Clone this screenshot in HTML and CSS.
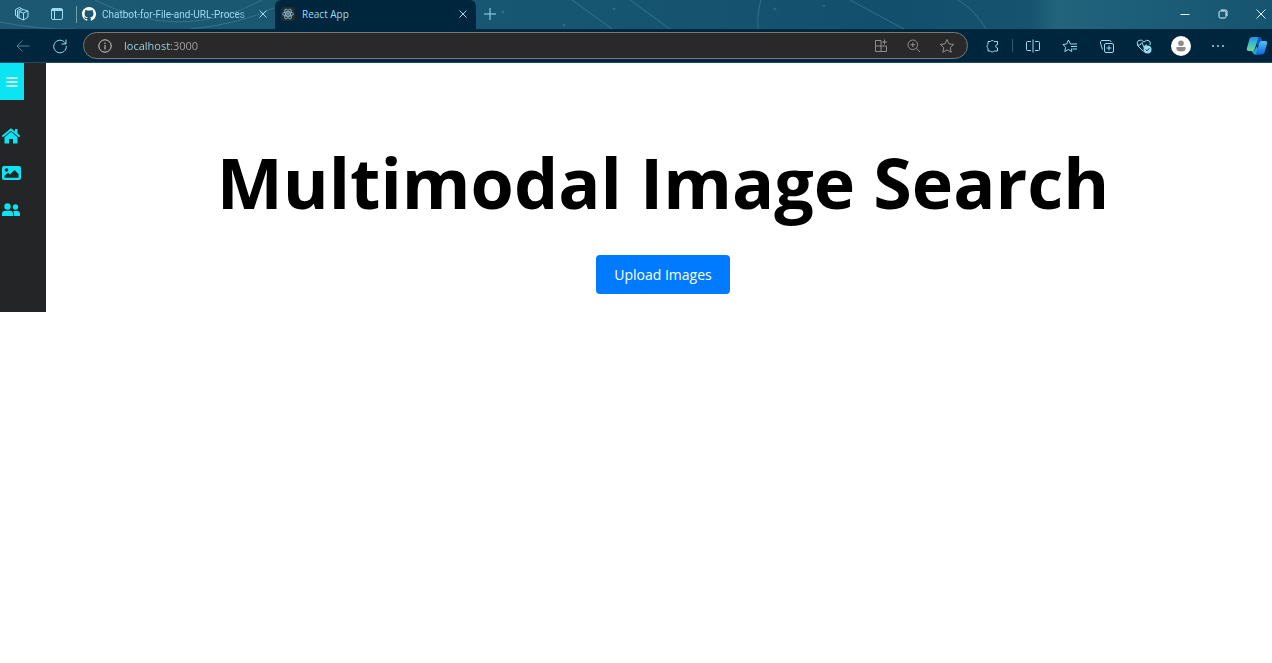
FILE: index.html
```html
<!DOCTYPE html>
<html lang="en">
<head>
    <meta charset="UTF-8">
    <meta name="viewport" content="width=device-width, initial-scale=1.0">
    <title>React App</title>
    <link rel="stylesheet" href="styles.css">
</head>
<body>

    <!-- Browser window -->
    <header class="browser">
        <div class="tab-strip">
            <svg class="strip-art" viewBox="0 0 1272 29" preserveAspectRatio="none" aria-hidden="true">
                <path d="M0 22 Q40 30 75 29 M95 0 Q180 44 262 0 M190 29 Q240 24 274 8 M572 0 L612 29 M630 0 L670 29 M761 0 Q757 12 758 29 M850 0 L904 29 M958 0 Q975 10 986 29"/>
                <circle cx="503" cy="12" r="1"/>
                <circle cx="614" cy="9" r="1"/>
                <circle cx="564" cy="25" r="1"/>
                <circle cx="824" cy="6" r="1"/>
                <circle cx="775" cy="9" r="1"/>
            </svg>
            <button class="icon-btn" aria-label="Workspaces">
                <svg width="16" height="16" viewBox="0 0 16 16"><path d="M5 5.500 L9 3.500 L14 5 V11 L9.500 14 L5 12 Z M5 5.500 L9.500 7 L14 5 M9.500 7 V14 M5 12 L3.500 11.500 V4.500 L7.500 2.500 L9 3.500 M3.500 10.500 L1.500 9.500 V3.500 L5.500 1.500 L7.500 2.500"/></svg>
            </button>
            <button class="icon-btn tab-menu" aria-label="Tab actions">
                <svg width="14" height="14" viewBox="0 0 14 14"><rect x="1.500" y="1.500" width="11" height="11" rx="1.500"/><path d="M1.500 3 H12.500" stroke-width="2"/><path d="M4.500 4 V12"/></svg>
            </button>
            <div class="tab tab-github">
                <svg class="tab-icon" viewBox="0 0 16 16" aria-hidden="true"><path class="solid" d="M8 0C3.580 0 0 3.580 0 8c0 3.540 2.290 6.530 5.470 7.590.4.070.55-.17.55-.38 0-.19-.01-.82-.01-1.490-2.010.37-2.530-.49-2.690-.94-.09-.23-.48-.94-.82-1.130-.28-.15-.68-.52-.01-.53.63-.01 1.080.58 1.230.82.72 1.210 1.870.87 2.330.66.07-.52.28-.87.51-1.070-1.780-.2-3.640-.89-3.640-3.950 0-.87.31-1.590.82-2.150-.08-.2-.36-1.020.08-2.120 0 0 .67-.21 2.200.82a7.600 7.600 0 0 1 4 0c1.530-1.040 2.200-.82 2.200-.82.44 1.100.16 1.920.08 2.120.51.56.82 1.270.82 2.150 0 3.070-1.870 3.750-3.650 3.950.29.25.54.73.54 1.480 0 1.070-.01 1.930-.01 2.200 0 .21.15.46.55.38A8 8 0 0 0 16 8c0-4.420-3.580-8-8-8z"/></svg>
                <span class="tab-title">Chatbot-for-File-and-URL-Proces</span>
                <button class="tab-close" aria-label="Close tab"><svg width="8" height="8" viewBox="0 0 8 8"><path d="M0.500 0.500 L7.500 7.500 M7.500 0.500 L0.500 7.500"/></svg></button>
            </div>
            <div class="tab tab-active">
                <svg class="tab-icon react" viewBox="0 0 14 14" aria-hidden="true"><rect width="14" height="14" rx="2"/><ellipse cx="7" cy="7" rx="5.500" ry="2.200"/><ellipse cx="7" cy="7" rx="5.500" ry="2.200" transform="rotate(60 7 7)"/><ellipse cx="7" cy="7" rx="5.500" ry="2.200" transform="rotate(120 7 7)"/><circle cx="7" cy="7" r="1"/></svg>
                <span class="tab-title">React App</span>
                <button class="tab-close" aria-label="Close tab"><svg width="8" height="8" viewBox="0 0 8 8"><path d="M0.500 0.500 L7.500 7.500 M7.500 0.500 L0.500 7.500"/></svg></button>
            </div>
            <button class="new-tab" aria-label="New tab"><svg width="12" height="12" viewBox="0 0 12 12"><path d="M6 0 V12 M0 6 H12"/></svg></button>
            <div class="window-controls">
                <button aria-label="Minimize"><svg width="10" height="10" viewBox="0 0 10 10"><path d="M0.500 5.500 H9.500"/></svg></button>
                <button aria-label="Restore"><svg width="10" height="10" viewBox="0 0 10 10"><rect x="1" y="2" width="7" height="7" rx="1.500"/><path d="M3 1 H7.500 Q9 1 9 2.500 V7"/></svg></button>
                <button aria-label="Close"><svg width="10" height="10" viewBox="0 0 10 10"><path d="M0.500 0.500 L9.500 9.500 M9.500 0.500 L0.500 9.500"/></svg></button>
            </div>
        </div>

        <div class="toolbar">
            <button class="icon-btn back" aria-label="Back"><svg width="14" height="14" viewBox="0 0 14 14"><path d="M13.500 7 H1 M6.500 1.500 L1 7 L6.500 12.500"/></svg></button>
            <button class="icon-btn" aria-label="Refresh"><svg width="16" height="16" viewBox="0 0 16 16"><path d="M13.800 6 A6.300 6.300 0 1 0 14.300 8 M14 1.500 V6 H9.500"/></svg></button>
            <div class="address">
                <button aria-label="Site information"><svg width="14" height="14" viewBox="0 0 14 14"><circle cx="7" cy="7" r="6.200"/><path d="M7 6 V10.500 M7 3.500 V5"/></svg></button>
                <input type="text" class="url" value="localhost:3000" aria-label="Address">
                <button class="dim" aria-label="App available"><svg width="14" height="14" viewBox="0 0 14 14"><path d="M7 1.500 H1.500 V12.500 H12.500 V7 H1.500 M7 1.500 V12.500 M10.500 0.500 V5.500 M8 3 H13"/></svg></button>
                <button aria-label="Zoom" class="dim"><svg width="14" height="14" viewBox="0 0 14 14"><circle cx="5.800" cy="5.800" r="4.800"/><path d="M9.300 9.300 L13 13 M3.500 5.800 H8.100 M5.800 3.500 V8.100"/></svg></button>
                <button aria-label="Add to favorites" class="dim"><svg width="16" height="16" viewBox="0 0 16 16"><path d="M8 1.500 L10 5.900 L14.700 6.400 L11.200 9.600 L12.200 14.300 L8 11.900 L3.800 14.300 L4.800 9.600 L1.300 6.400 L6 5.900 Z"/></svg></button>
            </div>
            <button class="icon-btn" aria-label="Extensions"><svg width="14" height="14" viewBox="0 0 14 14"><path d="M3 2.500 H5.500 A2 2 0 0 1 9 2.500 H12.500 V5.500 A1.600 1.600 0 0 0 12.500 9 V12 H9 A2 2 0 0 1 5.500 12 H3 V9 A2 2 0 0 1 3 5.500 Z"/></svg></button>
            <span class="divider"></span>
            <button class="icon-btn" aria-label="Split screen"><svg width="14" height="14" viewBox="0 0 14 14"><path d="M7 0.500 V13.500 M5 2.500 H1.500 Q0.500 2.500 0.500 3.500 V10.500 Q0.500 11.500 1.500 11.500 H5 M9 2.500 H12.500 Q13.500 2.500 13.500 3.500 V10.500 Q13.500 11.500 12.500 11.500 H9"/></svg></button>
            <button class="icon-btn" aria-label="Favorites"><svg width="16" height="16" viewBox="0 0 16 16"><path d="M9.500 10.500 L9.800 13.500 L6.500 11.500 L2.800 13.500 L3.600 9.400 L1 6.500 L4.700 6 L6.500 2 L8.400 6 H15 M9 8.500 H15 M10.500 11 H15"/></svg></button>
            <button class="icon-btn" aria-label="Collections"><svg width="16" height="16" viewBox="0 0 16 16"><rect x="5.500" y="5.500" width="9" height="9" rx="1.500"/><path d="M10 7.500 V12.500 M7.500 10 H12.500 M3.500 11.500 L1.500 5 Q1.200 3.500 2.500 2.500 H10.500 Q12 2.500 12 4"/></svg></button>
            <button class="icon-btn" aria-label="Browser essentials"><svg width="16" height="16" viewBox="0 0 16 16"><path d="M7.500 13.500 L2 8 Q0 4.500 2.500 2.500 Q5.500 1 8 4 Q10.500 1 13.500 3 Q15 5 14 7 M1.500 7 H4 L6 4.500 L8 9.500 L9.500 7 H11"/><circle class="badge" cx="11.500" cy="11.500" r="4"/><path class="check" d="M9.700 11.500 L11 12.800 L13.300 10.300"/></svg></button>
            <button class="icon-btn" aria-label="Profile"><svg width="20" height="20" viewBox="0 0 20 20"><circle class="avatar-bg" cx="10" cy="10" r="10"/><circle class="avatar-person" cx="10" cy="7.200" r="2.800"/><path class="avatar-person" d="M5.500 11 H14.500 Q15.500 15.500 10 15.500 Q4.500 15.500 5.500 11 Z"/></svg></button>
            <button class="icon-btn" aria-label="Settings and more"><svg width="12" height="4" viewBox="0 0 12 4"><path stroke-width="1.500" d="M0 2 H2 M5 2 H7 M10 2 H12"/></svg></button>
            <button class="icon-btn copilot" aria-label="Copilot">
                <svg width="22" height="20" viewBox="0 0 22 20">
                    <defs>
                        <linearGradient id="leafLeft" x1="0" y1="0" x2="0" y2="1"><stop offset="0" stop-color="#2a8be0"/><stop offset="0.400" stop-color="#35b9d4"/><stop offset="1" stop-color="#70d88a"/></linearGradient>
                        <linearGradient id="leafRight" x1="0" y1="0" x2="0" y2="1"><stop offset="0" stop-color="#4cc4f5"/><stop offset="1" stop-color="#1265e8"/></linearGradient>
                    </defs>
                    <path fill="#1558c0" stroke="none" d="M10 1 H13 Q15 1 15.600 3 L16.500 6 L11 10 Z"/>
                    <path fill="url(#leafLeft)" stroke="none" d="M6 1 H11.500 Q12.500 1 12 3 L8.500 13.500 Q8 15 6.500 15 H3 Q0 15 1 12 L3.500 3 Q4 1 6 1 Z"/>
                    <path fill="#2ba7c9" stroke="none" d="M5.500 15 H8 L11 10 L12.500 18.500 H9.500 Q7.500 18.500 7 17 Z"/>
                    <path fill="url(#leafRight)" stroke="none" d="M15.500 5 H19 Q22 5 21 8 L18.500 16.500 Q17.800 18.500 16 18.500 H10.500 Q9.500 18.500 10 17 L13.500 6.500 Q14 5 15.500 5 Z"/>
                </svg>
            </button>
        </div>
    </header>

    <!-- Page -->
    <div class="app">
        <nav class="sidebar">
            <button class="menu-btn" aria-label="Menu"><svg width="12" height="10" viewBox="0 0 12 10"><path d="M0.500 1 H11.500 M0.500 5 H11.500 M0.500 9 H11.500"/></svg></button>
            <a href="#home" aria-label="Home"><svg width="18" height="16" viewBox="0 0 18 16"><path d="M9 3.800 L15.500 9.200 V15 Q15.500 15.500 15 15.500 H11 V11 H7 V15.500 H3 Q2.500 15.500 2.500 15 V9.200 Z"/><path class="roof" d="M1 8 L9 1.500 L17 8"/><path d="M13 1 H15.500 V6.500 L13 4.500 Z"/></svg></a>
            <a href="#images" aria-label="Images"><svg width="19" height="14" viewBox="0 0 19 14"><path fill-rule="evenodd" d="M2 0 H17 Q19 0 19 2 V12 Q19 14 17 14 H2 Q0 14 0 12 V2 Q0 0 2 0 Z M4.500 2.200 A1.800 1.800 0 1 0 4.500 5.800 A1.800 1.800 0 1 0 4.500 2.200 Z M2.500 11.800 H16.500 V8 L12.500 4 L8 8.500 L6 6.800 L2.500 9.800 Z"/></svg></a>
            <a href="#people" aria-label="People"><svg width="18" height="14" viewBox="0 0 18 14"><circle cx="5.500" cy="3.500" r="3.200"/><circle cx="13.500" cy="4" r="2.700"/><path d="M0 13 V11 Q0 7.800 3.200 7.800 H7.800 Q11 7.800 11 11 V13 Z M12 13 V10.500 Q12 9 11 8 H15 Q18 8 18 11 V13 Z"/></svg></a>
        </nav>
        <main class="content">
            <h1>Multimodal Image Search</h1>
            <button class="upload-btn">Upload Images</button>
        </main>
    </div>

</body>
</html>
```
FILE: styles.css
```css
* {
    box-sizing: border-box;
}
body {
    margin: 0;
    background: white;
    font-family: "Segoe UI", "Open Sans", "Noto Sans", sans-serif;
}
button {
    display: flex;
    align-items: center;
    justify-content: center;
    flex-shrink: 0;
    padding: 0;
    border: none;
    background: none;
    color: inherit;
    font-family: inherit;
    cursor: pointer;
}
svg {
    display: block;
    flex-shrink: 0;
}

/* Browser window */
.browser {
    color: #9bdcf2;
    border-bottom: 1px solid #1b4a63;
}
.browser svg {
    fill: none;
    stroke: currentColor;
}
.tab-strip {
    position: relative;
    display: flex;
    height: 29px;
    padding: 0 0 1px 3px;
    background: linear-gradient(90deg, #1c5871, #175671 45%, #124f6d 70%, #15536e 81%, #21647c 83%, #165470);
}
.tab-strip .strip-art {
    position: absolute;
    top: 0;
    left: 0;
    width: 100%;
    height: 100%;
    color: #4c91a8;
    opacity: 0.5;
}
.tab-strip > button,
.tab,
.window-controls {
    position: relative;
}
.icon-btn {
    width: 37px;
}
.tab-menu {
    width: 33px;
}
.tab {
    display: flex;
    align-items: center;
    gap: 7px;
    padding: 0 9px 0 6px;
    font-size: 10px;
}
.tab-github {
    width: 199px;
    gap: 6px;
    padding-right: 8px;
    margin-left: 3px;
}
.tab-github::before {
    content: "";
    position: absolute;
    left: 0;
    width: 1px;
    height: 17px;
    background: #6da0b2;
}
.tab-active {
    width: 201px;
    height: 29px;
    padding-bottom: 1px;
    background: #00263d;
    border-radius: 6px 6px 0 0;
}
.tab-icon {
    width: 14px;
    height: 14px;
}
.browser .solid {
    fill: white;
    stroke: none;
}
.react {
    stroke-width: 0.7px;
}
.react rect {
    fill: #242a2f;
    stroke: none;
}
.tab-title {
    flex: 1;
    white-space: nowrap;
}
.tab-github .tab-title {
    font-family: "Segoe UI", Roboto, sans-serif;
    mask-image: linear-gradient(90deg, black 90%, transparent);
}
.new-tab {
    width: 28px;
}
.window-controls {
    display: flex;
    margin-left: auto;
    color: #e3f5fa;
}
.window-controls button {
    width: 38px;
}
.window-controls button:last-child {
    width: 30px;
    padding-left: 8px;
}
.toolbar {
    display: flex;
    height: 33px;
    padding: 0 1px 0 4px;
    background: #00263d;
}
.back {
    opacity: 0.5;
}
.address {
    flex: 1;
    display: flex;
    align-items: center;
    height: 27px;
    margin: 3px 5px;
    padding: 0 4px;
    background: #292929;
    border: 1px solid #75797c;
    border-radius: 14px;
    color: #d0d0d0;
}
.address button {
    width: 33px;
    height: 100%;
}
.address .dim {
    color: #8f8f8f;
}
.url {
    flex: 1;
    min-width: 0;
    padding: 0 0 0 3px;
    border: none;
    outline: none;
    font-family: inherit;
    font-size: 11px;
    color: transparent;
    background: linear-gradient(90deg, #9bdcf2 50px, #a5a5a5 50px);
    background-clip: text;
}
.divider {
    width: 1px;
    height: 13px;
    margin: 10px 1px 0 2px;
    background: #315b70;
}
.browser .badge {
    fill: #9bdcf2;
    stroke: none;
}
.browser .check {
    stroke: #00263d;
}
.browser .avatar-bg {
    fill: white;
    stroke: none;
}
.browser .avatar-person {
    fill: #8e8b89;
    stroke: none;
}
.copilot {
    width: 28px;
    margin-left: 7px;
}

/* Page */
.app {
    display: flex;
    align-items: flex-start;
}
.sidebar {
    display: flex;
    flex-direction: column;
    width: 46px;
    min-height: 249px;
    background: #242526;
}
.menu-btn {
    width: 24px;
    height: 37px;
    margin-bottom: 17px;
    background: #0be4f2;
    color: white;
}
.menu-btn svg {
    stroke: currentColor;
    stroke-width: 1.5px;
}
.sidebar a {
    display: flex;
    align-items: center;
    height: 37px;
    padding-left: 2px;
    color: #0be4f2;
}
.sidebar a svg {
    fill: currentColor;
}
.sidebar .roof {
    fill: none;
    stroke: currentColor;
    stroke-width: 2px;
    stroke-linecap: round;
}
.content {
    flex: 1;
    display: flex;
    flex-direction: column;
    align-items: center;
    gap: 24px;
    padding: 70px 0 18px 8px;
}
h1 {
    margin: 0;
    font-size: 70px;
    line-height: 98px;
    color: black;
    text-align: center;
}
.upload-btn {
    height: 39px;
    padding: 0 18px;
    background: #007bff;
    border-radius: 4px;
    color: white;
    font-size: 14px;
}
.upload-btn:hover {
    background: #0069d9;
}
```
